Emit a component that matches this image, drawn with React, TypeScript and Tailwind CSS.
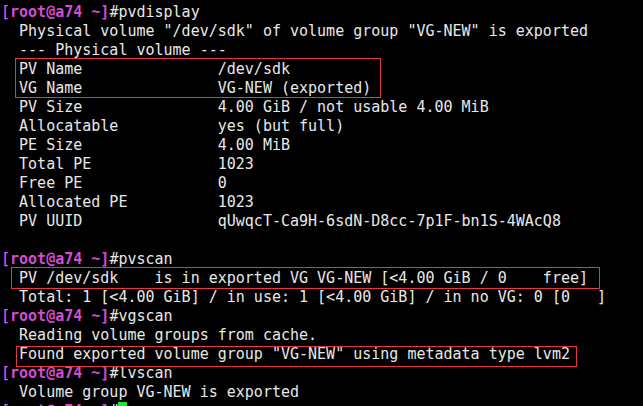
import React from "react";

const Prompt: React.FC<{ cmd: string; cursor?: boolean }> = ({ cmd, cursor }) => (
  <div>
    <span className="text-[#ff55ff]">[</span>
    <span className="font-bold text-[#d44bd4]">root@a74 ~]</span>
    <span className="text-[#e8e8e8]">#{cmd}</span>
    {cursor && <span className="inline-block w-[9px] h-[17px] align-[-3px] bg-[#1fe81f]" />}
  </div>
);

const Line: React.FC<{ text: string }> = ({ text }) => <div>{text === "" ? " " : text}</div>;

// red annotation rectangle drawn over a group of lines
const Marked: React.FC<{ box: string; children: React.ReactNode }> = ({ box, children }) => (
  <div className="relative">
    {children}
    <div className={`absolute border border-solid border-[#e8383c] ${box}`} />
  </div>
);

const pvdisplay = [
  '  Physical volume "/dev/sdk" of volume group "VG-NEW" is exported',
  "  --- Physical volume ---",
];

const pvRest = [
  "  PV Size               4.00 GiB / not usable 4.00 MiB",
  "  Allocatable           yes (but full)",
  "  PE Size               4.00 MiB",
  "  Total PE              1023",
  "  Free PE               0",
  "  Allocated PE          1023",
  "  PV UUID               qUwqcT-Ca9H-6sdN-D8cc-7p1F-bn1S-4WAcQ8",
  "",
];

export default function App() {
  return (
    <div
      className="w-[643px] h-[406px] overflow-hidden bg-black text-[#e8e8e8] text-[15px] leading-[19px] whitespace-pre pt-[3px] pl-px"
      style={{ fontFamily: '"DejaVu Sans Mono", monospace' }}
    >
      <Prompt cmd="pvdisplay" />
      {pvdisplay.map((l, i) => <Line key={i} text={l} />)}
      <Marked box="left-[14px] w-[366px] -top-[2px] h-[40px]">
        <Line text="  PV Name               /dev/sdk" />
        <Line text="  VG Name               VG-NEW (exported)" />
      </Marked>
      {pvRest.map((l, i) => <Line key={i} text={l} />)}

      <Prompt cmd="pvscan" />
      <Marked box="left-[10px] w-[589px] -top-[2px] h-[22px]">
        <Line text="  PV /dev/sdk    is in exported VG VG-NEW [<4.00 GiB / 0    free]" />
      </Marked>
      <Line text="  Total: 1 [<4.00 GiB] / in use: 1 [<4.00 GiB] / in no VG: 0 [0   ]" />

      <Prompt cmd="vgscan" />
      <Line text="  Reading volume groups from cache." />
      <Marked box="left-[15px] w-[561px] top-px h-[21px]">
        <Line text={'  Found exported volume group "VG-NEW" using metadata type lvm2'} />
      </Marked>

      <Prompt cmd="lvscan" />
      <Line text="  Volume group VG-NEW is exported" />
      <Prompt cmd="" cursor />
    </div>
  );
}
